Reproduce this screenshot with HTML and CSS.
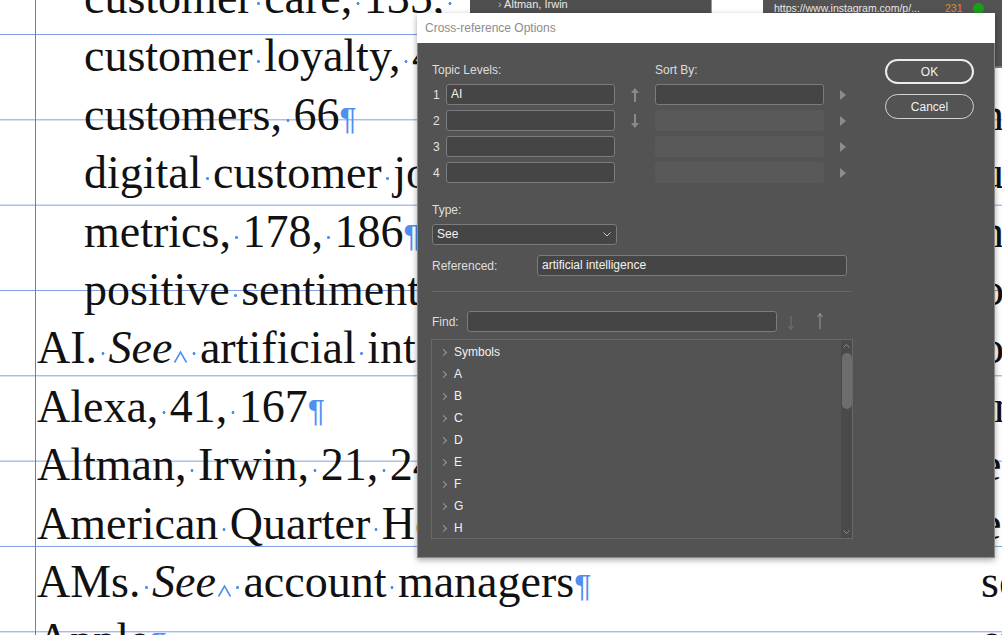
FILE: index.html
```html
<!DOCTYPE html>
<html lang="en">
<head>
    <meta charset="UTF-8">
    <meta name="viewport" content="width=device-width, initial-scale=1.0">
    <title>Cross-reference Options</title>
    <link rel="stylesheet" href="styles.css">
</head>
<body>
    <div class="page">
        <div class="text">
            <div class="line"><div class="entry sub">customer<span class="sp"></span>care,<span class="sp"></span>135,<span class="sp"></span><span class="gap"></span>160<span class="pil">¶</span></div><div class="entry"></div></div>
            <div class="line"><div class="entry sub">customer<span class="sp"></span>loyalty,<span class="sp"></span>44,<span class="sp"></span>52<span class="pil">¶</span></div><div class="entry"></div></div>
            <div class="line"><div class="entry sub">customers,<span class="sp"></span>66<span class="pil">¶</span></div><div class="entry">nostalgia,<span class="sp"></span>112<span class="pil">¶</span></div></div>
            <div class="line"><div class="entry sub">digital<span class="sp"></span>customer<span class="sp"></span>journey,<span class="sp"></span>93<span class="pil">¶</span></div><div class="entry">user<span class="sp"></span>experience,<span class="sp"></span>54<span class="pil">¶</span></div></div>
            <div class="line"><div class="entry sub">metrics,<span class="sp"></span>178,<span class="sp"></span>186<span class="pil">¶</span></div><div class="entry">net<span class="sp"></span>promoter<span class="sp"></span>score,<span class="sp"></span>77<span class="pil">¶</span></div></div>
            <div class="line"><div class="entry sub">positive<span class="sp"></span>sentiment,<span class="sp"></span>36<span class="pil">¶</span></div><div class="entry">omnichannel,<span class="sp"></span>141<span class="pil">¶</span></div></div>
            <div class="line"><div class="entry">AI.<span class="sp"></span><i>See</i><svg class="caret" width="15" height="13" viewBox="0 0 15 13"><path d="M1.5 12.5 L7.5 2 L13.5 12.5" fill="none" stroke="#4f8ff0" stroke-width="1.6"/></svg><span class="sp"></span>artificial<span class="sp"></span>intelligence<span class="pil">¶</span></div><div class="entry">online<span class="sp"></span>reviews,<span class="sp"></span>88<span class="pil">¶</span></div></div>
            <div class="line"><div class="entry">Alexa,<span class="sp"></span>41,<span class="sp"></span>167<span class="pil">¶</span></div><div class="entry">influencers,<span class="sp"></span>29<span class="pil">¶</span></div></div>
            <div class="line"><div class="entry">Altman,<span class="sp"></span>Irwin,<span class="sp"></span>21,<span class="sp"></span>24<span class="pil">¶</span></div><div class="entry">email,<span class="sp"></span>102<span class="pil">¶</span></div></div>
            <div class="line"><div class="entry">American<span class="sp"></span>Quarter<span class="sp"></span>Horse<span class="sp"></span>Association,<span class="sp"></span>123<span class="pil">¶</span></div><div class="entry">engagement,<span class="sp"></span>61<span class="pil">¶</span></div></div>
            <div class="line"><div class="entry">AMs.<span class="sp"></span><i>See</i><svg class="caret" width="15" height="13" viewBox="0 0 15 13"><path d="M1.5 12.5 L7.5 2 L13.5 12.5" fill="none" stroke="#4f8ff0" stroke-width="1.6"/></svg><span class="sp"></span>account<span class="sp"></span>managers<span class="pil">¶</span></div><div class="entry">see<span class="sp"></span>also<span class="sp"></span>brand<span class="pil">¶</span></div></div>
            <div class="line"><div class="entry">Apple<span class="pil">¶</span></div><div class="entry">events,<span class="sp"></span>19<span class="pil">¶</span></div></div>
        </div>
    </div>

    <!-- floating panels behind the dialog -->
    <div class="panel links"><span class="tw">›</span> Altman, Irwin</div>
    <div class="panel blank"></div>
    <div class="panel hyper">
        <span class="url">https://www.instagram.com/p/...</span>
        <span class="count">231</span>
        <span class="status"></span>
    </div>

    <div class="dialog">
        <div class="titlebar">Cross-reference Options</div>
        <div class="dlg-body">
            <div class="main">
                <div class="levels">
                    <div class="lbl topic">Topic Levels:</div>
                    <div class="lbl">Sort By:</div>
                    <div></div>

                    <div class="num">1</div>
                    <div class="field">AI</div>
                    <div class="move">
                        <svg width="8" height="14" viewBox="0 0 8 14"><path d="M4 0 L8 5 L5 5 L5 14 L3 14 L3 5 L0 5 Z" fill="#8a8a8a"/></svg>
                    </div>
                    <div class="field"></div>
                    <div class="tri"></div>

                    <div class="num">2</div>
                    <div class="field"></div>
                    <div class="move">
                        <svg width="8" height="14" viewBox="0 0 8 14"><path d="M4 14 L8 9 L5 9 L5 0 L3 0 L3 9 L0 9 Z" fill="#8a8a8a"/></svg>
                    </div>
                    <div class="field off"></div>
                    <div class="tri"></div>

                    <div class="num">3</div>
                    <div class="field"></div>
                    <div class="move"></div>
                    <div class="field off"></div>
                    <div class="tri"></div>

                    <div class="num">4</div>
                    <div class="field"></div>
                    <div class="move"></div>
                    <div class="field off"></div>
                    <div class="tri"></div>
                </div>

                <div class="lbl type-lbl">Type:</div>
                <div class="field select">
                    <span>See</span>
                    <svg width="8" height="5" viewBox="0 0 8 5"><path d="M0.5 0.5 L4 4 L7.5 0.5" fill="none" stroke="#c8c8c8" stroke-width="1"/></svg>
                </div>

                <div class="row ref-row">
                    <div class="lbl ref-lbl">Referenced:</div>
                    <div class="field wide">artificial intelligence</div>
                </div>

                <div class="sep"></div>

                <div class="row find-row">
                    <div class="lbl find-lbl">Find:</div>
                    <div class="field wide"></div>
                    <svg class="find-down" width="6" height="14" viewBox="0 0 6 14"><path d="M3 0 L3 13 M0.5 10 L3 13.5 L5.5 10" fill="none" stroke="#6e6e6e" stroke-width="1.2"/></svg>
                    <svg class="find-up" width="6" height="16" viewBox="0 0 6 16"><path d="M3 16 L3 1 M0.5 4 L3 0.5 L5.5 4" fill="none" stroke="#8e8e8e" stroke-width="1.2"/></svg>
                </div>

                <div class="tree">
                    <ul class="items">
                        <li><span class="chev"></span>Symbols</li>
                        <li><span class="chev"></span>A</li>
                        <li><span class="chev"></span>B</li>
                        <li><span class="chev"></span>C</li>
                        <li><span class="chev"></span>D</li>
                        <li><span class="chev"></span>E</li>
                        <li><span class="chev"></span>F</li>
                        <li><span class="chev"></span>G</li>
                        <li><span class="chev"></span>H</li>
                    </ul>
                    <div class="scroll">
                        <svg width="7" height="12" viewBox="0 0 7 12"><path d="M0.5 7.5 L3.5 4.5 L6.5 7.5" fill="none" stroke="#8a8a8a" stroke-width="1"/></svg>
                        <div class="thumb"></div>
                        <div class="track"></div>
                        <svg width="7" height="12" viewBox="0 0 7 12"><path d="M0.5 4.5 L3.5 7.5 L6.5 4.5" fill="none" stroke="#8a8a8a" stroke-width="1"/></svg>
                    </div>
                </div>
            </div>

            <div class="buttons">
                <button class="btn default">OK</button>
                <button class="btn">Cancel</button>
            </div>
        </div>
    </div>
</body>
</html>
```

FILE: styles.css
```css
html, body {
    height: 100%;
}
body {
    margin: 0;
    overflow: hidden;
    position: relative;
    background-color: #fff;
    background-image: linear-gradient(to bottom, #7f9fe4 1px, transparent 1px);
    background-size: 100% 85.33px;
    background-position: 0 34px;
}
.page {
    padding-left: 35px;
}
.text {
    border-left: 1px solid #9b5fd3;
    margin-top: -31px;
    padding-bottom: 60px;
    font-family: "Liberation Serif", serif;
    font-size: 46px;
    line-height: 58.4px;
    color: #111;
}
.line {
    display: grid;
    grid-template-columns: 944px 1fr;
    white-space: nowrap;
}
.entry {
    overflow: hidden;
    padding-left: 1px;
}
.entry.sub {
    padding-left: 48px;
}
.sp {
    display: inline-block;
    width: 0.25em;
    height: 11px;
    background: radial-gradient(circle at 50% 1.5px, #4f8ff0 1.2px, transparent 1.8px);
}
.gap {
    display: inline-block;
    width: 20px;
}
.pil {
    font-family: "Liberation Sans", sans-serif;
    font-size: 32px;
    line-height: 1;
    color: #4f8ff0;
}
.caret {
    margin-left: 1px;
}

/* panels sticking out behind the dialog */
.panel {
    position: absolute;
    top: 0;
    height: 13px;
    overflow: hidden;
    font-family: "Liberation Sans", sans-serif;
    font-size: 11px;
    color: #e8e8e8;
}
.links {
    left: 470px;
    width: 241px;
    background: #4f4f4f;
    line-height: 8px;
    padding-left: 28px;
    box-sizing: border-box;
}
.links .tw {
    color: #b8b8b8;
}
.blank {
    left: 711px;
    width: 52px;
    background: #fff;
    border-left: 1px solid #9a9a9a;
}
.hyper {
    left: 763px;
    right: 0;
    height: 64px;
    background: #535353;
    border-bottom: 2px solid #7a7a7a;
    display: flex;
    align-items: flex-start;
    padding: 2px 0 0 11px;
    font-size: 10.5px;
}
.hyper .url {
    width: 171px;
}
.hyper .count {
    color: #e08a2c;
}
.hyper .status {
    width: 11px;
    height: 11px;
    border-radius: 50%;
    background: #1a9f1a;
    margin: 1px 0 0 10px;
}

/* dialog */
.dialog {
    position: absolute;
    left: 417px;
    top: 13px;
    width: 578px;
    box-sizing: border-box;
    border: 1px solid #8a8a8a;
    border-top: none;
    background: #535353;
    box-shadow: 0 2px 6px rgba(0, 0, 0, 0.35);
    font-family: "Liberation Sans", sans-serif;
    font-size: 12px;
    color: #dcdcdc;
}
.titlebar {
    height: 30px;
    line-height: 30px;
    margin: 0 -1px;
    padding-left: 8px;
    background: #fff;
    color: #8c8c8c;
}
.dlg-body {
    display: flex;
    gap: 32px;
    padding: 0 20px 18px 14px;
}
.main {
    width: 421px;
    padding-top: 20px;
}
.lbl {
    line-height: 14px;
    color: #dedede;
}
.levels {
    display: grid;
    grid-template-columns: 14px 169px 40px 169px 29px;
    grid-template-rows: 16px repeat(4, 21px);
    row-gap: 5px;
    align-items: center;
}
.levels .lbl {
    align-self: start;
}
.levels .topic {
    grid-column: 1 / 4;
}
.num {
    padding-left: 1px;
    color: #e2e2e2;
}
.field {
    height: 21px;
    box-sizing: border-box;
    border: 1px solid #7b7b7b;
    border-radius: 3px;
    background: #454545;
    color: #f2f2f2;
    line-height: 19px;
    padding: 0 4px;
}
.field.off {
    border-color: transparent;
    background: #595959;
}
.move {
    display: flex;
    justify-content: center;
}
.move svg {
    display: block;
}
.tri {
    width: 0;
    height: 0;
    margin-left: 16px;
    border-top: 5px solid transparent;
    border-bottom: 5px solid transparent;
    border-left: 6px solid #8c8c8c;
}
.type-lbl {
    margin-top: 20px;
}
.select {
    width: 185px;
    margin-top: 7px;
    display: flex;
    align-items: center;
    justify-content: space-between;
    padding-right: 5px;
}
.row {
    display: flex;
    align-items: center;
}
.ref-row {
    margin-top: 10px;
}
.ref-lbl {
    width: 105px;
}
.find-lbl {
    width: 35px;
}
.wide {
    width: 310px;
}
.sep {
    height: 1px;
    width: 420px;
    margin-top: 15px;
    background: #676767;
}
.find-row {
    margin-top: 19px;
}
.find-down {
    margin: 2px 0 0 11px;
}
.find-up {
    margin: -2px 0 0 23px;
}
.tree {
    margin-top: 7px;
    height: 200px;
    box-sizing: border-box;
    border: 1px solid #686868;
    display: flex;
    margin-left: -1px;
}
.items {
    list-style: none;
    margin: 0;
    padding: 1px 0 0 0;
    flex: 1;
}
.items li {
    height: 22px;
    line-height: 22px;
    display: flex;
    align-items: center;
    color: #f2f2f2;
}
.chev {
    width: 4px;
    height: 4px;
    border-right: 1px solid #9a9a9a;
    border-top: 1px solid #9a9a9a;
    transform: rotate(45deg);
    margin: 0 8px 0 9px;
}
.scroll {
    width: 11px;
    background: #4a4a4a;
    display: flex;
    flex-direction: column;
    align-items: center;
}
.scroll svg {
    display: block;
    flex: none;
}
.thumb {
    width: 10px;
    height: 56px;
    margin-top: 1px;
    border-radius: 5px;
    background: #6d6d6d;
}
.track {
    flex: 1;
}
.buttons {
    margin-top: 16px;
    display: flex;
    flex-direction: column;
    gap: 10px;
}
.btn {
    width: 89px;
    height: 25px;
    box-sizing: border-box;
    border: 1px solid #d2d2d2;
    border-radius: 13px;
    background: transparent;
    color: #f0f0f0;
    font-family: "Liberation Sans", sans-serif;
    font-size: 12px;
    padding: 0;
}
.btn.default {
    border: 2px solid #ececec;
}
```
